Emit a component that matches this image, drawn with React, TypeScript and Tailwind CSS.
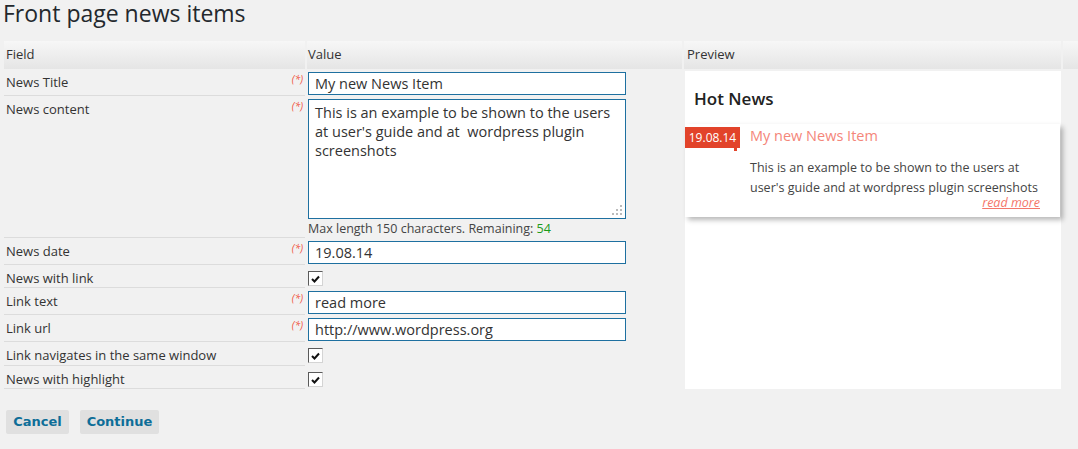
import React from "react";

const font = { fontFamily: '"Open Sans", "Liberation Sans", sans-serif' };

function Req() {
  return <span className="absolute right-[2px] top-[5px] text-[10px] italic leading-none text-[#f0553f]">(*)</span>;
}

function Check() {
  return (
    <div className="mt-[5px] flex h-[15px] w-[15px] items-center justify-center border border-t-[#5a5a5a] border-l-[#5a5a5a] border-r-[#d4d4d4] border-b-[#d4d4d4] bg-white">
      <svg width="9" height="8" viewBox="0 0 9 8">
        <path d="M1 4 L3.5 6.5 L8 1.5" stroke="#111" strokeWidth="2" fill="none" />
      </svg>
    </div>
  );
}

function Input({ value }: { value: string }) {
  return (
    <div className="mt-[3px] flex h-[23px] w-[318px] items-center border border-[#1e70a0] bg-white pl-[6px] text-[14.5px] text-[#333]">
      {value}
    </div>
  );
}

function Row({ label, req, h, children }: { label: string; req?: boolean; h: number; children: React.ReactNode }) {
  return (
    <div className="flex" style={{ height: h }}>
      <div className="relative w-[301px] border-b border-[#dcdcdc] pl-[2px] pt-[4px] text-[13px] leading-[18px] text-[#333]">
        {label}
        {req && <Req />}
      </div>
      <div className="ml-[3px] flex-1 pl-[0px]">{children}</div>
    </div>
  );
}

export default function App() {
  return (
    <div className="h-[449px] w-[1078px] overflow-hidden bg-[#f1f1f1]" style={font}>
      <div className="h-[41px] pl-[3px] pt-[1px] text-[23px] leading-[24px] text-[#23282d]">Front page news items</div>
      <div className="flex">
        <div className="w-[682px] pl-[4px]">
          <div className="flex h-[28px]">
            <div className="flex w-[301px] items-center bg-gradient-to-b from-[#f7f7f7] to-[#e5e5e5] pl-[2px] text-[13px] text-[#333]">Field</div>
            <div className="ml-[2px] flex flex-1 items-center bg-gradient-to-b from-[#f7f7f7] to-[#e5e5e5] pl-[1px] text-[13px] text-[#333]">Value</div>
          </div>
          <Row label="News Title" req h={27}>
            <Input value="My new News Item" />
          </Row>
          <Row label="News content" req h={142}>
            <div className="relative mt-[3px] h-[120px] w-[318px] border border-[#1e70a0] bg-white pl-[6px] pt-[3px] text-[14.5px] leading-[19px] text-[#333]">
              This is an example to be shown to the users at user's guide and at&nbsp; wordpress plugin screenshots
              <svg className="absolute bottom-[1px] right-[1px]" width="12" height="12" viewBox="0 0 12 12">
                <rect x="8" y="0" width="2" height="2" fill="#bbb" />
                <rect x="4" y="4" width="2" height="2" fill="#bbb" />
                <rect x="8" y="4" width="2" height="2" fill="#bbb" />
                <rect x="0" y="8" width="2" height="2" fill="#bbb" />
                <rect x="4" y="8" width="2" height="2" fill="#bbb" />
                <rect x="8" y="8" width="2" height="2" fill="#bbb" />
              </svg>
            </div>
            <div className="mt-[1px] text-[12.5px] leading-[17px] text-[#444]">
              Max length 150 characters. Remaining: <span className="text-[#1a9a1a]">54</span>
            </div>
          </Row>
          <Row label="News date" req h={27}>
            <Input value="19.08.14" />
          </Row>
          <Row label="News with link" h={23}>
            <div className="pt-[1px]"><Check /></div>
          </Row>
          <Row label="Link text" req h={27}>
            <Input value="read more" />
          </Row>
          <Row label="Link url" req h={27}>
            <Input value="http://www.wordpress.org" />
          </Row>
          <Row label="Link navigates in the same window" h={24}>
            <div className="pt-[1px]"><Check /></div>
          </Row>
          <Row label="News with highlight" h={23}>
            <div className="pt-[1px]"><Check /></div>
          </Row>
          <div className="mt-[21px] flex gap-[11px] pl-[2px]" style={{ fontFamily: '"DejaVu Sans", Verdana, sans-serif' }}>
            <div className="flex h-[24px] w-[63px] items-center justify-center rounded-[2px] bg-[#e0e0e0] text-[13px] font-bold text-[#0e6e98]">Cancel</div>
            <div className="flex h-[24px] w-[79px] items-center justify-center rounded-[2px] bg-[#e0e0e0] text-[13px] font-bold text-[#0e6e98]">Continue</div>
          </div>
        </div>
        <div className="ml-[2px] w-[377px]">
          <div className="flex h-[28px] items-center bg-gradient-to-b from-[#f7f7f7] to-[#e5e5e5] pl-[3px] text-[13px] text-[#333]">Preview</div>
          <div className="ml-[1px] mt-[2px] h-[318px] w-[376px] bg-white">
            <div className="pl-[9px] pt-[18px] text-[17px] font-semibold leading-[20px] text-[#222]">Hot News</div>
            <div className="mt-[15px] h-[93px] w-[375px] bg-white shadow-[3px_3px_5px_rgba(0,0,0,0.28)]">
              <div className="flex pt-[3px]">
                <div className="relative h-[21px] w-[55px] shrink-0 bg-[#e2432a] text-center text-[12px] leading-[21px] text-white">
                  19.08.14
                  <div className="absolute bottom-[-3px] right-[3px] h-[3px] w-[3px] bg-[#e2432a]" />
                </div>
                <div className="ml-[10px] flex-1 pr-[20px]">
                  <div className="text-[14.5px] leading-[18px] text-[#f4867a]">My new News Item</div>
                  <div className="mt-[13px] text-[12.5px] leading-[20px] text-[#444]">
                    This is an example to be shown to the users at user's guide and at wordpress plugin screenshots
                  </div>
                  <div className="-mt-[3px] text-right text-[12.5px] italic leading-[16px] text-[#f4766a] underline">read more</div>
                </div>
              </div>
            </div>
          </div>
        </div>
        <div className="ml-[2px] flex-1">
          <div className="h-[28px] bg-gradient-to-b from-[#f7f7f7] to-[#e5e5e5]" />
        </div>
      </div>
    </div>
  );
}
